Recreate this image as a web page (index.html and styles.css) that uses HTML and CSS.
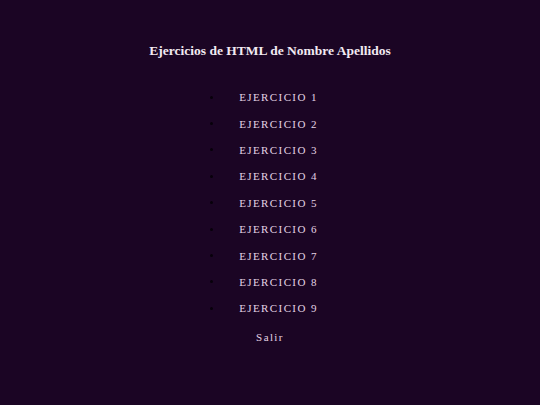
FILE: index.html
```html
<!DOCTYPE html>
<html lang="es">
<head>
<meta charset="utf-8">
<title>Ejercicios de HTML</title>
<link rel="stylesheet" href="styles.css">
</head>
<body>
<main class="page">
  <h1 class="title">Ejercicios de HTML de Nombre Apellidos</h1>
  <ul class="menu">
    <li class="item"><span class="dot"></span><a class="link" href="#">EJERCICIO 1</a></li>
    <li class="item"><span class="dot"></span><a class="link" href="#">EJERCICIO 2</a></li>
    <li class="item"><span class="dot"></span><a class="link" href="#">EJERCICIO 3</a></li>
    <li class="item"><span class="dot"></span><a class="link" href="#">EJERCICIO 4</a></li>
    <li class="item"><span class="dot"></span><a class="link" href="#">EJERCICIO 5</a></li>
    <li class="item"><span class="dot"></span><a class="link" href="#">EJERCICIO 6</a></li>
    <li class="item"><span class="dot"></span><a class="link" href="#">EJERCICIO 7</a></li>
    <li class="item"><span class="dot"></span><a class="link" href="#">EJERCICIO 8</a></li>
    <li class="item"><span class="dot"></span><a class="link" href="#">EJERCICIO 9</a></li>
  </ul>
  <a class="exit" href="#">Salir</a>
</main>
</body>
</html>
```
FILE: styles.css
```css
html, body {
  margin: 0;
  padding: 0;
  height: 100%;
  background: #1b0524;
}
.page {
  display: flex;
  flex-direction: column;
  align-items: center;
  padding-top: 42px;
  font-family: "Liberation Serif", "Times New Roman", serif;
}
.title {
  margin: 0;
  font-size: 13.5px;
  line-height: 18px;
  font-weight: bold;
  color: #f2eaf2;
}
.menu {
  list-style: none;
  margin: 24px 12px 0 0;
  padding: 0;
  display: flex;
  flex-direction: column;
}
.item {
  display: flex;
  align-items: center;
  height: 26.4px;
}
.dot {
  width: 3px;
  height: 3px;
  border-radius: 50%;
  background: #07000a;
  margin-right: 26px;
}
.link {
  color: #e4d4e4;
  text-decoration: none;
  font-size: 11px;
  letter-spacing: 1.4px;
  line-height: 12px;
}
.exit {
  margin-top: 9px;
  color: #e4d4e4;
  text-decoration: none;
  font-size: 11px;
  letter-spacing: 1.4px;
  line-height: 12px;
}
```
